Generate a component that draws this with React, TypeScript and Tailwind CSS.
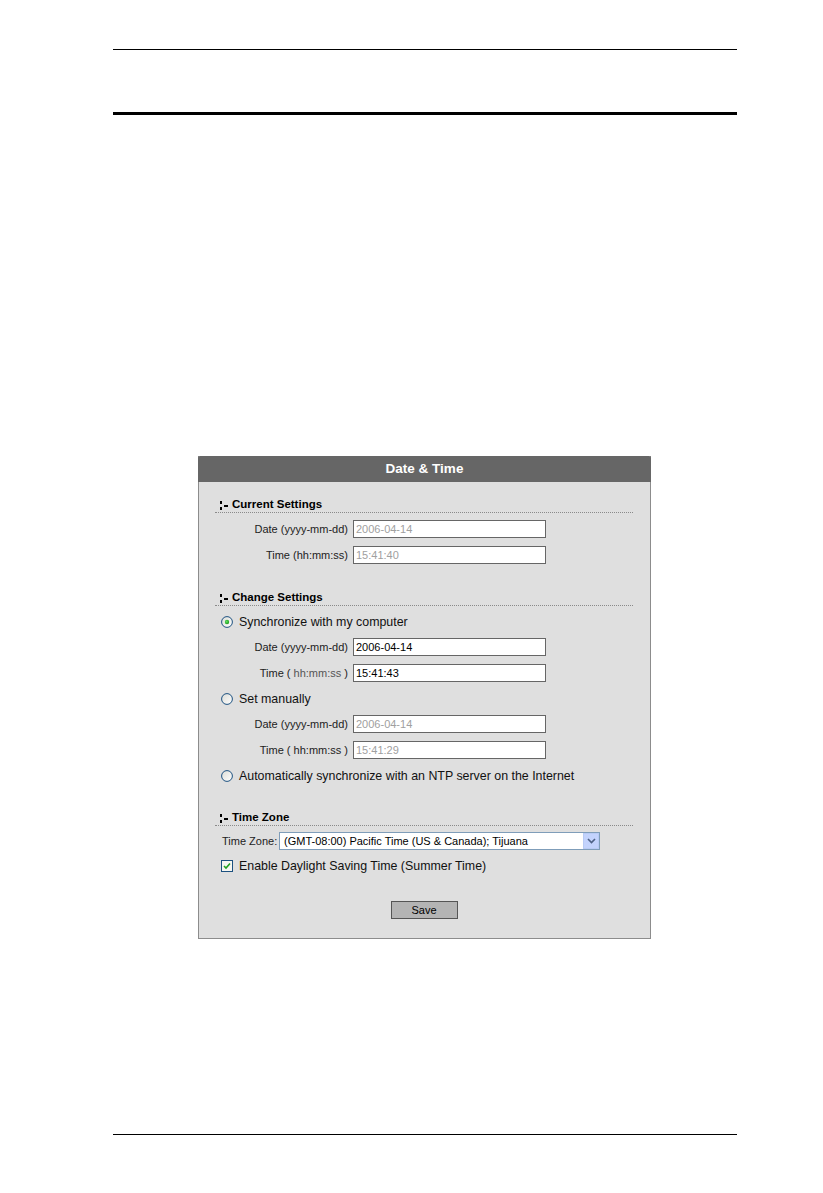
import React from 'react';

const FONT = { fontFamily: '"Liberation Sans", Arial, sans-serif' };

function Bullet() {
  return (
    <svg width="11" height="11" viewBox="0 0 11 11" className="shrink-0">
      <rect x="1" y="1" width="2" height="3" fill="#000" />
      <rect x="1" y="7" width="2" height="3" fill="#000" />
      <rect x="5" y="5" width="4" height="2" fill="#000" />
    </svg>
  );
}

function Heading({ title, className = '' }: { title: string; className?: string }) {
  return (
    <div className={className}>
      <div className="flex items-center h-[14px] pl-[4px] gap-[2px]">
        <Bullet />
        <span className="text-[11.5px] font-bold text-black leading-none">{title}</span>
      </div>
      <div className="border-b border-dotted border-[#8a8a8a]" />
    </div>
  );
}

function Field({ label, value, muted, className = '' }: { label: React.ReactNode; value: string; muted?: boolean; className?: string }) {
  return (
    <div className={`flex items-center ${className}`}>
      <div className="w-[138px] text-right text-[11px] text-[#222] pr-[5px] leading-none">{label}</div>
      <div className={`w-[193px] h-[18px] border border-[#666] bg-white flex items-center pl-[2px] text-[11px] leading-none ${muted ? 'text-[#a0a0a0]' : 'text-black'}`}>
        {value}
      </div>
    </div>
  );
}

function Radio({ checked }: { checked?: boolean }) {
  return (
    <svg width="12" height="12" viewBox="0 0 12 12" className="shrink-0">
      <defs>
        <linearGradient id="rg" x1="0" y1="0" x2="1" y2="1">
          <stop offset="0" stopColor="#dcdcd6" />
          <stop offset="1" stopColor="#ffffff" />
        </linearGradient>
        <radialGradient id="dot" cx="0.4" cy="0.4" r="0.6">
          <stop offset="0" stopColor="#5ee25e" />
          <stop offset="1" stopColor="#1f9a1f" />
        </radialGradient>
      </defs>
      <circle cx="6" cy="6" r="5.4" fill="url(#rg)" stroke="#1c5180" strokeWidth="1" />
      {checked && <circle cx="6" cy="6" r="2.2" fill="url(#dot)" />}
    </svg>
  );
}

function RadioRow({ label, checked, className = '' }: { label: string; checked?: boolean; className?: string }) {
  return (
    <div className={`flex items-center h-[16px] pl-[6px] gap-[6px] ${className}`}>
      <Radio checked={checked} />
      <span className="text-[12.4px] text-[#111] leading-none">{label}</span>
    </div>
  );
}

export default function App() {
  return (
    <div className="w-[823px] h-[1193px] bg-white flex flex-col" style={FONT}>
      <div className="mt-[49px] ml-[113px] w-[624px] h-px bg-black" />
      <div className="mt-[62px] ml-[113px] w-[624px] h-[3px] bg-black" />

      <div className="mt-[341px] ml-[198px] w-[453px] h-[483px] flex flex-col bg-[#dfdfdf] border-x border-b border-[#8c8c8c]">
        <div className="h-[26px] -mx-px bg-[#666666] rounded-t-[2px] flex items-center justify-center">
          <span className="text-white font-bold text-[13.5px] leading-none">Date &amp; Time</span>
        </div>

        <div className="pl-[16px] pr-[17px] pt-[16px]">
          <Heading title="Current Settings" />
          <Field className="mt-[7px]" label="Date (yyyy-mm-dd)" value="2006-04-14" muted />
          <Field className="mt-[8px]" label="Time (hh:mm:ss)" value="15:41:40" muted />

          <Heading className="mt-[27px]" title="Change Settings" />
          <RadioRow className="mt-[8px]" label="Synchronize with my computer" checked />
          <Field className="mt-[8px]" label="Date (yyyy-mm-dd)" value="2006-04-14" />
          <Field
            className="mt-[8px]"
            label={<>Time ( <span className="text-[#555]">hh:mm:ss</span> )</>}
            value="15:41:43"
          />
          <RadioRow className="mt-[9px]" label="Set manually" />
          <Field className="mt-[8px]" label="Date (yyyy-mm-dd)" value="2006-04-14" muted />
          <Field className="mt-[8px]" label="Time ( hh:mm:ss )" value="15:41:29" muted />
          <RadioRow className="mt-[9px]" label="Automatically synchronize with an NTP server on the Internet" />

          <Heading className="mt-[27px]" title="Time Zone" />
          <div className="mt-[6px] flex items-center pl-[7px]">
            <span className="text-[11px] text-[#222] w-[57px] leading-none">Time Zone:</span>
            <div className="w-[321px] h-[18px] border border-[#7f9db9] bg-white flex items-center">
              <span className="flex-1 pl-[4px] text-[11px] text-black leading-none">(GMT-08:00) Pacific Time (US &amp; Canada); Tijuana</span>
              <div className="w-[16px] h-[16px] bg-[#c3d3fd] border border-[#b8cbf5] flex items-center justify-center">
                <svg width="9" height="6" viewBox="0 0 9 6">
                  <path d="M1 1 L4.5 4.5 L8 1" fill="none" stroke="#4d6185" strokeWidth="1.6" />
                </svg>
              </div>
            </div>
          </div>

          <div className="mt-[8px] flex items-center h-[16px] pl-[6px] gap-[6px]">
            <svg width="12" height="12" viewBox="0 0 12 12" className="shrink-0">
              <rect x="0.5" y="0.5" width="11" height="11" fill="#f6f6f2" stroke="#1c5180" />
              <path d="M3 6 L5 8 L9 3.5" fill="none" stroke="#21a121" strokeWidth="1.6" />
            </svg>
            <span className="text-[12.4px] text-[#111] leading-none">Enable Daylight Saving Time (Summer Time)</span>
          </div>

          <div className="mt-[27px] flex justify-center">
            <div className="w-[67px] h-[18px] bg-[#b4b4b4] border border-[#555] flex items-center justify-center text-[11px] text-black leading-none">
              Save
            </div>
          </div>
        </div>
      </div>

      <div className="mt-[195px] ml-[113px] w-[624px] h-px bg-black" />
    </div>
  );
}
